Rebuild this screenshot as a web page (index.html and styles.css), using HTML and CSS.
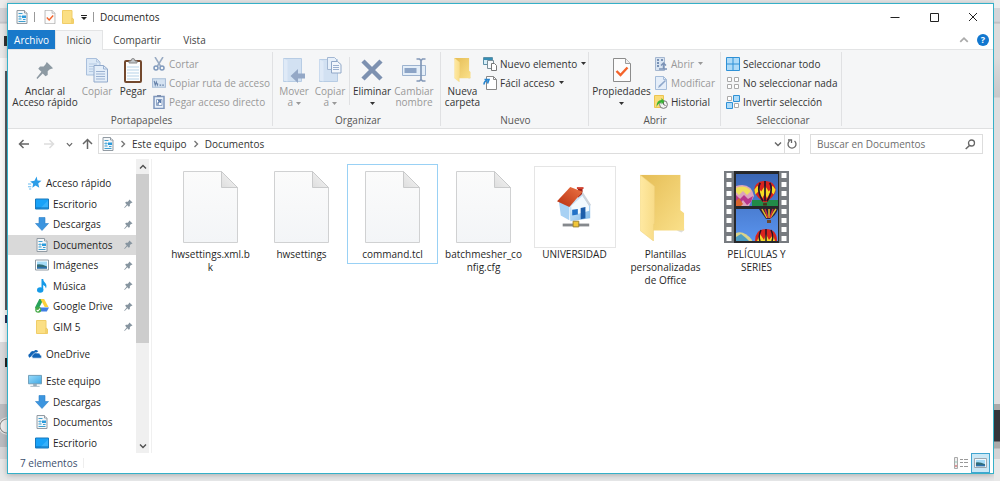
FILE: index.html
```html
<!DOCTYPE html>
<html lang="es">
<head>
<meta charset="utf-8">
<title>Documentos</title>
<link rel="stylesheet" href="styles.css">
</head>
<body>
<svg class="defs" aria-hidden="true">
  <defs>
    <linearGradient id="paper" x1="0" y1="0" x2="0" y2="1"><stop offset="0" stop-color="#fbfbfb"/><stop offset="1" stop-color="#f3f5f7"/></linearGradient>
    <linearGradient id="fold" x1="0" y1="1" x2="1" y2="0"><stop offset="0" stop-color="#dedede"/><stop offset="1" stop-color="#f7f7f7"/></linearGradient>
    <linearGradient id="gold" x1="0" y1="0" x2="1" y2="1"><stop offset="0" stop-color="#e5bd55"/><stop offset="1" stop-color="#fae08a"/></linearGradient>
    <linearGradient id="goldf" x1="0" y1="0" x2="1" y2="0"><stop offset="0" stop-color="#ffe9a2"/><stop offset="1" stop-color="#f8dc88"/></linearGradient>
    <linearGradient id="sky" x1="0" y1="0" x2="0" y2="1"><stop offset="0" stop-color="#3a66b4"/><stop offset="1" stop-color="#5a94ee"/></linearGradient>
    <linearGradient id="roof" x1="0" y1="1" x2="1" y2="0"><stop offset="0" stop-color="#b82f10"/><stop offset="1" stop-color="#ec7444"/></linearGradient>
    <linearGradient id="wall" x1="0" y1="0" x2="1" y2="1"><stop offset="0" stop-color="#e4f4ff"/><stop offset="1" stop-color="#7fb8e8"/></linearGradient>
    <linearGradient id="screen" x1="0" y1="0" x2="1" y2="1"><stop offset="0" stop-color="#9bdcfb"/><stop offset="1" stop-color="#3ea7e4"/></linearGradient>
  </defs>
  <symbol id="i-docs" viewBox="0 0 12 14"><path d="M1 .5h7.500l2.500 2.500v10.500H1z" fill="#f4f7f9" stroke="#929ba3"/><path d="M8.500 .5v2.500H11" fill="#fff" stroke="#929ba3"/><path d="M2.500 3.500h4M2.500 6.500h3M2.500 9h3M2.500 11.500h7M7 9.500h2.500" stroke="#3f9fd0"/><path d="M6 5.500h4v2.500H6z" fill="#2b9bdc"/><path d="M4 5v4" stroke="#7cc2e6"/></symbol>
  <symbol id="i-check" viewBox="0 0 18 24"><path d="M.5.500h12l5 5v18H.5z" fill="#fcfcfc" stroke="#8c8c8c"/><path d="M12.500.500v5h5" fill="#eee" stroke="#9b9b9b"/><path d="M3.500 13l4 4 7-7.500" fill="none" stroke="#f4632a" stroke-width="2.400"/></symbol>
  <symbol id="i-folder" viewBox="0 0 12 14"><path d="M.5.500h9.500v7.500l1.500 1v4.500H.5z" fill="#fbdf84" stroke="#f0cd68"/><path d="M10 8v5" stroke="#e9c357"/></symbol>
  <symbol id="i-caret" viewBox="0 0 5 3"><path d="M0 0h5L2.500 3z" fill="currentColor"/></symbol>
  <symbol id="i-pin" viewBox="0 0 20 20"><path d="M12 1l7 7-4 1.500-2 2v4l-2.500 1.500-3-3-6 6-1-1L6 12 2.500 8.500 4.500 6h4l2-2z" fill="currentColor"/></symbol>
  <symbol id="i-copy" viewBox="0 0 22 25"><path d="M.5.500h10l3.500 3.500v13H.5z" fill="#dce9f7" stroke="#a9bfdc"/><path d="M10.500.500V4H14M3 6h8M3 8.500h5M3 11h4M3 13.500h4" fill="none" stroke="#b4c9e2"/><path d="M8 7.500h9.500L21.500 11v13H8z" fill="#e4eef9" stroke="#91a9cb"/><path d="M17.500 7.500V11h4M10 13.500h9M10 16h9M10 18.500h9M10 21h9" fill="none" stroke="#9bb2d2"/></symbol>
  <symbol id="i-paste" viewBox="0 0 18 25"><rect x="1" y="3" width="16" height="21" rx="1" fill="#fdfefe" stroke="#73492e" stroke-width="2"/><path d="M5 5V3h2q0-2.500 2-2.500T11 3h2v2z" fill="#c3c7ca" stroke="#888"/><path d="M3 9h12M3 12h12M3 15h12M3 18h12M3 21h12" stroke="#b7d3e8"/></symbol>
  <symbol id="i-cut" viewBox="0 0 12 14"><path d="M2 0l5.500 9M10 0L4.500 9" stroke="#99abc3" stroke-width="1.500"/><circle cx="3" cy="11" r="2" fill="none" stroke="#7f99bd" stroke-width="1.500"/><circle cx="9" cy="11" r="2" fill="none" stroke="#7f99bd" stroke-width="1.500"/></symbol>
  <symbol id="i-path" viewBox="0 0 13 9"><path d="M.5.500h12v8H.5z" fill="#d5e3f2" stroke="#a9bed8"/><path d="M2 2.500l1 4 1-3 1 3 .5-1.500M7 6.500h1.500M9.500 6.500h1.500" fill="none" stroke="#6681a8"/></symbol>
  <symbol id="i-pshort" viewBox="0 0 12 14"><path d="M1 1.500h10v12H1z" fill="#e9f1fa" stroke="#7f97bd" stroke-width="1.500"/><path d="M4 1h4" stroke="#7d8fae" stroke-width="2"/><path d="M3.500 4.500h5.500v6H3.500z" fill="#fff" stroke="#90a6c7"/><path d="M5 10V8l2-2M5 5.500h2.500V8" fill="none" stroke="#5e7dab" stroke-width="1.300"/></symbol>
  <symbol id="i-move" viewBox="0 0 24 26"><path d="M1.500 1.500h18v23h-18z" fill="#d2e1f2" stroke="#b7cce4"/><path d="M1.500 1.500l4 2v21l-4-1z" fill="#dfeaf7"/><path d="M23 16.500h-7V12l-7.500 7 7.500 7v-4.500h7z" fill="#94a8c6"/></symbol>
  <symbol id="i-copyto" viewBox="0 0 24 26"><path d="M1.500 2.500h18v22h-18z" fill="#d2e1f2" stroke="#b7cce4"/><path d="M1.500 2.500l4 2v20l-4-1z" fill="#dfeaf7"/><path d="M9.500.500h7l2 2v10h-9z" fill="#e7f0fa" stroke="#a3b7d2"/><path d="M13.500 4.500h6l3.500 3V16h-9.500z" fill="#f3f7fc" stroke="#91a8c8"/><path d="M15 8.500h6M15 10.500h6M15 12.500h6" stroke="#9cb1cf"/></symbol>
  <symbol id="i-x" viewBox="0 0 22 22"><path d="M2 2l18 18M20 2L2 20" stroke="#7d91b0" stroke-width="4.500"/></symbol>
  <symbol id="i-rename" viewBox="0 0 24 24"><path d="M.5 7.500h23v10H.5z" fill="#e4eef8" stroke="#9db3cf"/><path d="M2.500 10h12v5h-12z" fill="#8ca4c6"/><path d="M14.500 1h3l1.500 1.500L20.500 1h3M19 2.500v19M14.500 23h3l1.500-1.500 1.500 1.500h3" fill="none" stroke="#8298b8" stroke-width="1.700"/></symbol>
  <symbol id="i-bigfolder" viewBox="0 0 46 69"><path d="M38 58l12-3-7 5z" fill="#ddd"/><path d="M0 0h42v37l4 3v18H12z" fill="url(#gold)"/><path d="M0 0l15 12v38l-1 2v17L0 58z" fill="url(#goldf)" stroke="#f0d27c" stroke-width=".6"/></symbol>
  <symbol id="i-newitem" viewBox="0 0 14 14"><path d="M.5.500h9v7h-9z" fill="#d6eef8" stroke="#5d91a8"/><path d="M1 1h8v2H1z" fill="#368eb5"/><path d="M4.500 3.500h6v8h-6z" fill="#f6f9fb" stroke="#7b8e98"/><path d="M8.500 6.500h3l2 2v5h-5z" fill="#fff" stroke="#777"/></symbol>
  <symbol id="i-easy" viewBox="0 0 14 14"><path d="M3.500.500h7l3 3v10h-10z" fill="#fff" stroke="#888"/><path d="M10.500.500v3h3" fill="none" stroke="#888"/><path d="M1 8.500q0-3.500 3.500-4M1.500 3.500H6L4.500 7.500" fill="none" stroke="#2584cf" stroke-width="1.600"/></symbol>
  <symbol id="i-open" viewBox="0 0 12 14"><path d="M.5.500h9v13h-9z" fill="#d8e4f2" stroke="#a5b7d0"/><path d="M2 3h2M2 6h2M2 9h2M6 3h2" stroke="#7891b5" stroke-width="2"/><path d="M8.500 12V6M6 8.500L8.500 6 11 8.500M4 12h8" fill="none" stroke="#7c93b6" stroke-width="1.500"/></symbol>
  <symbol id="i-edit" viewBox="0 0 12 14"><path d="M.5.500h8l3 3v10H.5z" fill="#e5eef9" stroke="#a5bcd9"/><path d="M11 5l-6 6-2 1 1-2.500L10 4z" fill="#8fa8cb"/><path d="M8.500.500v3h3" fill="none" stroke="#a5bcd9"/></symbol>
  <symbol id="i-history" viewBox="0 0 14 14"><path d="M.5.500h9v12h-9z" fill="#fbdc78" stroke="#ecc450"/><circle cx="9.500" cy="9.500" r="3.900" fill="#f3f3f3" stroke="#777"/><path d="M9.500 7v2.500l2 1" fill="none" stroke="#666"/><path d="M2.500 12q0-7 5-7V3l3 3.500-3 3V7.500Q4.500 7.500 2.500 12z" fill="#38b234"/></symbol>
  <symbol id="i-all" viewBox="0 0 14 14"><path d="M.5.500h13v13H.5zM7 .5v13M.5 7h13" fill="#aedbf8" stroke="#2e91d6"/></symbol>
  <symbol id="i-none" viewBox="0 0 14 14"><path d="M1.500 1.500h4v4h-4zM8.500 1.500h4v4h-4zM1.500 8.500h4v4h-4zM8.500 8.500h4v4h-4z" fill="#fff" stroke="#aaa"/></symbol>
  <symbol id="i-inv" viewBox="0 0 14 14"><path d="M1.500 1.500h4v4h-4zM8.500 8.500h4v4h-4z" fill="#fff" stroke="#aaa"/><path d="M7.500.500h6v6h-6zM.5 7.500h6v6h-6z" fill="#aedbf8" stroke="#2e91d6"/></symbol>
  <symbol id="i-chev" viewBox="0 0 8 8"><path d="M1 2.500l3 3 3-3" fill="none" stroke="currentColor" stroke-width="1.400"/></symbol>
  <symbol id="i-star" viewBox="0 0 13 12"><path d="M8 0l.8 3.700 3.700.3-3 2.400 1 4-3.500-2-3 2 .8-3.600L2 4.500l4-.7z" fill="#2c9de8"/><path d="M0 7h3M0 9.500h3M1 11.500h2" stroke="#68bbf0"/></symbol>
  <symbol id="i-desk" viewBox="0 0 14 11"><path d="M.5.500h13v10H.5z" fill="#18a2f8" stroke="#1878bc"/><path d="M5 10L13 2v8z" fill="#36b1fb"/><path d="M1 9.500h12" stroke="#0c6eb6"/></symbol>
  <symbol id="i-down" viewBox="0 0 14 14"><path d="M4 .5h6v6h3.500L7 13.500.5 6.500H4z" fill="#3c95df" stroke="#2c7fc8" stroke-width=".6"/></symbol>
  <symbol id="i-img" viewBox="0 0 14 11"><path d="M.5.500h13v10H.5z" fill="#fff" stroke="#919ba4"/><path d="M2 2h10v7H2z" fill="#a5dcf8"/><path d="M2 5q4-1 10 2v2H2z" fill="#326d78"/><path d="M2 7.500h10V9H2z" fill="#2a6fae"/></symbol>
  <symbol id="i-music" viewBox="0 0 10 14"><ellipse cx="3.200" cy="11" rx="3.200" ry="2.700" fill="#159ae8"/><path d="M4.500 0h1.700q0 2.500 2 4T9 9.500Q8.500 6.500 6.200 6v5H4.500z" fill="#159ae8"/></symbol>
  <symbol id="i-drive" viewBox="0 0 13 13"><path d="M4 0h4L4 8l-2 3.500L0 8z" fill="#28a25b"/><path d="M5 0h3.500l4 7.500H9z" fill="#fbd13e"/><path d="M4.500 8H13l-2 3.500H2.500z" fill="#3f7fe5"/><circle cx="3" cy="10" r="2.800" fill="#46a947"/><path d="M1.500 10l1.200 1.200L4.700 9" fill="none" stroke="#fff"/></symbol>
  <symbol id="i-cloud" viewBox="0 0 15 10"><path d="M1.500 9Q-1 6 2 4.500 3 1 6.500 2 8-.5 11 2" fill="#1265b7"/><path d="M5 9.500Q2.500 7 5.500 5.500 7 2.500 10 4q3-.8 3.200 2 2.500 1 1 3.500z" fill="#1265b7" stroke="#fff" stroke-width=".7"/></symbol>
  <symbol id="i-pc" viewBox="0 0 15 13"><path d="M.5.500h14v9H.5z" fill="url(#screen)" stroke="#6c9ab5"/><path d="M6 10h3v1.500H6zM2.500 12.200h10" fill="#9cb1bf" stroke="#8ba2b2" stroke-width=".8"/></symbol>
  <symbol id="i-file" viewBox="0 0 55 72"><path d="M.5.500h38l16 16v55H.5z" fill="url(#paper)" stroke="#d0d1d2"/><path d="M38.500.500v16h16z" fill="url(#fold)" stroke="#c9cacb"/></symbol>
  <symbol id="i-house" viewBox="0 0 38 42"><path d="M22 1h5v12h-5z" fill="#a22015"/><path d="M21 0h7v2h-7z" fill="#cf4130"/><path d="M2 15l11 5v15L4 30z" fill="#a7d1f4"/><path d="M13 19L27 7l8 11v15l-21 3z" fill="url(#wall)"/><path d="M15 20L27 9l7 11v5l-18 5z" fill="#f3faff"/><path d="M0 15L14 0l13 5-14 16z" fill="url(#roof)"/><path d="M27 5l9 14-2 1-8-12z" fill="#cdd4dc"/><path d="M16 24l6-1v6l-6 1z" fill="#2372c8"/><path d="M25 22l5-1v12l-5 1z" fill="#1c5daa"/><path d="M6 40h28" stroke="#85898d" stroke-width="3"/><path d="M17 36h6v6h-6z" fill="#f1c638" stroke="#9a8130"/></symbol>
  <symbol id="i-balloon" viewBox="0 0 22 26"><path d="M11 0C4 0 0 4 0 9.500S7 19 9 22h4c2-3 9-7 9-12.500S18 0 11 0z" fill="#d9231e"/><path d="M0 9l3-4 4 6 4-6 4 6 4-6 3 4-2 5-3-3-4 7-2-5-3 5-4-7-3 3z" fill="#f7dc24"/><path d="M6 2Q2 10 9 21M16 2q4 8-3 19M11 0v21" fill="none" stroke="#25162a" stroke-width="1.800"/><path d="M9 23h4v2.500H9z" fill="#50301b"/></symbol>
  <symbol id="i-film" viewBox="0 0 65 72"><path d="M0 0h65v72H0z" fill="#777b80"/><path d="M10 0h45v72H10z" fill="#27282b"/><path d="M12 3h42v32H12zM12 38h42v32H12z" fill="url(#sky)"/><path d="M28 29h26v6H28z" fill="#218b48"/><path d="M12 15q15-4 18 10l-5 10H12z" fill="#dba4bd"/><path d="M12 17q9-4 15 3l-4 4-4-4-4 4-3-3z" fill="#efe05a"/><path d="M12 24l4 4 4-4 4 4 5-3-2 6-4 3-4-5-4 5-3-3z" fill="#b7378d"/><path d="M12 30l3-3 4 6-2 2h-5z" fill="#d9652d"/><use href="#i-balloon" x="30" y="10" width="22" height="25"/><path d="M35 38h19q-2 6-8 10h-4z" fill="#282341"/><path d="M38 38l5 9M45 38v9M52 38l-6 9" stroke="#e4bd26" stroke-width="1.500"/><path d="M41 38l3 9M49 38l-3 9" stroke="#d22e35" stroke-width="1.500"/><path d="M43 49h4v3h-4z" fill="#6b462c"/><path d="M12 62q8-3 16 7v1H12z" fill="#d9d38b"/><path d="M12 66l5-3 5 4 3 3H12z" fill="#4f9dc1"/><path d="M31 70q0-12 11-12t11 12z" fill="#d9231e"/><path d="M33 70l3-7 4 6 2-6 3 6 4-5 2 6z" fill="#f5dc2a"/><path d="M37 59q-3 6-1 11M47 59q3 6 1 11M42 58v12" fill="none" stroke="#25162a" stroke-width="1.500"/><path d="M5 2v70M60 2v70" stroke="#fff" stroke-width="5" stroke-dasharray="5 4"/></symbol>
</svg>

<div class="desk">
  <div class="behind behind-left"></div>
  <div class="window">
    <header class="titlebar">
      <svg class="s12x14"><use href="#i-docs"/></svg>
      <span class="rule"></span>
      <button class="plain" aria-label="Propiedades"><svg class="s12x14"><use href="#i-check"/></svg></button>
      <button class="plain" aria-label="Nueva carpeta"><svg class="s12x14"><use href="#i-folder"/></svg></button>
      <button class="plain quick" aria-label="Personalizar"><svg width="6" height="7" viewBox="0 0 6 7"><path d="M0 1.500h6" stroke="#222"/><path d="M0 3h6L3 6z" fill="#222"/></svg></button>
      <span class="rule"></span>
      <h1>Documentos</h1>
      <div class="controls">
        <button class="plain" aria-label="Minimizar"><svg width="10" height="10"><path d="M.5 5.500h9" stroke="#222"/></svg></button>
        <button class="plain" aria-label="Maximizar"><svg width="10" height="10"><path d="M1.500 1.500h8v8h-8z" fill="none" stroke="#222"/></svg></button>
        <button class="plain" aria-label="Cerrar"><svg width="10" height="10"><path d="M1 1l8 8M9 1L1 9" stroke="#222"/></svg></button>
      </div>
    </header>

    <nav class="tabs">
      <button class="tab file-tab">Archivo</button>
      <button class="tab active">Inicio</button>
      <button class="tab wide">Compartir</button>
      <button class="tab">Vista</button>
      <div class="help">
        <button class="plain faint flip" aria-label="Minimizar la cinta"><svg class="s10"><use href="#i-chev"/></svg></button>
        <button class="help-btn" aria-label="Ayuda">?</button>
      </div>
    </nav>

    <section class="ribbon">
      <div class="group g-clip">
        <div class="tools">
          <button class="big"><span class="pic pin-pic"><svg width="18" height="18"><use href="#i-pin"/></svg></span>Anclar al<br>Acceso rápido</button>
          <button class="big off"><span class="pic"><svg width="22" height="25"><use href="#i-copy"/></svg></span>Copiar</button>
          <button class="big"><span class="pic"><svg width="18" height="25"><use href="#i-paste"/></svg></span>Pegar</button>
          <div class="stack">
            <button class="small off"><svg class="s14"><use href="#i-cut"/></svg>Cortar</button>
            <button class="small off"><svg class="s14"><use href="#i-path"/></svg>Copiar ruta de acceso</button>
            <button class="small off"><svg class="s14"><use href="#i-pshort"/></svg>Pegar acceso directo</button>
          </div>
        </div>
        <h2>Portapapeles</h2>
      </div>
      <div class="group g-org">
        <div class="tools">
          <button class="big off"><span class="pic"><svg width="24" height="26"><use href="#i-move"/></svg></span>Mover<br>a <svg class="caret"><use href="#i-caret"/></svg></button>
          <button class="big off"><span class="pic"><svg width="24" height="26"><use href="#i-copyto"/></svg></span>Copiar<br>a <svg class="caret"><use href="#i-caret"/></svg></button>
          <span class="divider"></span>
          <button class="big"><span class="pic"><svg width="22" height="22"><use href="#i-x"/></svg></span>Eliminar<br><svg class="caret"><use href="#i-caret"/></svg></button>
          <button class="big off"><span class="pic"><svg width="24" height="24"><use href="#i-rename"/></svg></span>Cambiar<br>nombre</button>
        </div>
        <h2>Organizar</h2>
      </div>
      <div class="group g-new">
        <div class="tools">
          <button class="big"><span class="pic"><svg width="17" height="24"><use href="#i-bigfolder"/></svg></span>Nueva<br>carpeta</button>
          <div class="stack">
            <button class="small"><svg class="s14"><use href="#i-newitem"/></svg>Nuevo elemento <svg class="caret"><use href="#i-caret"/></svg></button>
            <button class="small"><svg class="s14"><use href="#i-easy"/></svg>Fácil acceso <svg class="caret"><use href="#i-caret"/></svg></button>
          </div>
        </div>
        <h2>Nuevo</h2>
      </div>
      <div class="group g-open">
        <div class="tools">
          <button class="big"><span class="pic"><svg width="18" height="24"><use href="#i-check"/></svg></span>Propiedades<br><svg class="caret"><use href="#i-caret"/></svg></button>
          <div class="stack">
            <button class="small off"><svg class="s14"><use href="#i-open"/></svg>Abrir <svg class="caret"><use href="#i-caret"/></svg></button>
            <button class="small off"><svg class="s14"><use href="#i-edit"/></svg>Modificar</button>
            <button class="small"><svg class="s14"><use href="#i-history"/></svg>Historial</button>
          </div>
        </div>
        <h2>Abrir</h2>
      </div>
      <div class="group g-sel">
        <div class="tools">
          <div class="stack">
            <button class="small"><svg class="s14"><use href="#i-all"/></svg>Seleccionar todo</button>
            <button class="small"><svg class="s14"><use href="#i-none"/></svg>No seleccionar nada</button>
            <button class="small"><svg class="s14"><use href="#i-inv"/></svg>Invertir selección</button>
          </div>
        </div>
        <h2>Seleccionar</h2>
      </div>
    </section>

    <div class="nav">
      <div class="arrows">
        <button class="plain" aria-label="Atrás"><svg width="12" height="10"><path d="M11 5H1.500M5.500 1l-4 4 4 4" fill="none" stroke="#666" stroke-width="1.500"/></svg></button>
        <button class="plain" aria-label="Adelante"><svg width="12" height="10"><path d="M1 5h9.500M6.500 1l4 4-4 4" fill="none" stroke="#ddd" stroke-width="1.500"/></svg></button>
        <button class="plain" aria-label="Recientes"><svg width="7" height="7"><use href="#i-chev"/></svg></button>
        <button class="plain" aria-label="Subir"><svg width="11" height="12"><path d="M5.500 11V1.500M1 6l4.500-4.500L10 6" fill="none" stroke="#666" stroke-width="1.500"/></svg></button>
      </div>
      <div class="address">
        <svg class="s12x14"><use href="#i-docs"/></svg>
        <svg class="s8 side"><use href="#i-chev"/></svg>
        <a href="#">Este equipo</a>
        <svg class="s8 side"><use href="#i-chev"/></svg>
        <a href="#">Documentos</a>
        <button class="plain drop" aria-label="Historial de direcciones"><svg class="s8"><use href="#i-chev"/></svg></button>
        <button class="plain refresh" aria-label="Actualizar"><svg width="10" height="10" viewBox="0 0 10 10"><path d="M2.500 2A4 4 0 1 0 7.500 2M1 1h3.500v3" fill="none" stroke="#666" stroke-width="1.300"/></svg></button>
      </div>
      <label class="search">
        <input type="text" placeholder="Buscar en Documentos" aria-label="Buscar en Documentos">
        <svg width="11" height="11" viewBox="0 0 11 11"><circle cx="6.500" cy="4" r="3" fill="none" stroke="#666" stroke-width="1.300"/><path d="M4.500 6.500L.7 10" stroke="#666" stroke-width="1.500"/></svg>
      </label>
    </div>

    <main class="body">
      <aside class="tree">
        <ul>
          <li class="root"><svg class="s14"><use href="#i-star"/></svg><a href="#">Acceso rápido</a></li>
          <li><svg class="s14"><use href="#i-desk"/></svg><a href="#">Escritorio</a><svg class="pin"><use href="#i-pin"/></svg></li>
          <li><svg class="s14"><use href="#i-down"/></svg><a href="#">Descargas</a><svg class="pin"><use href="#i-pin"/></svg></li>
          <li class="current"><svg class="s14"><use href="#i-docs"/></svg><a href="#">Documentos</a><svg class="pin"><use href="#i-pin"/></svg></li>
          <li><svg class="s14"><use href="#i-img"/></svg><a href="#">Imágenes</a><svg class="pin"><use href="#i-pin"/></svg></li>
          <li><svg class="s14"><use href="#i-music"/></svg><a href="#">Música</a><svg class="pin"><use href="#i-pin"/></svg></li>
          <li><svg class="s14"><use href="#i-drive"/></svg><a href="#">Google Drive</a><svg class="pin"><use href="#i-pin"/></svg></li>
          <li><svg class="s14"><use href="#i-folder"/></svg><a href="#">GIM 5</a><svg class="pin"><use href="#i-pin"/></svg></li>
        </ul>
        <ul>
          <li class="root"><svg class="s14"><use href="#i-cloud"/></svg><a href="#">OneDrive</a></li>
        </ul>
        <ul>
          <li class="root"><svg class="s14"><use href="#i-pc"/></svg><a href="#">Este equipo</a></li>
          <li><svg class="s14"><use href="#i-down"/></svg><a href="#">Descargas</a></li>
          <li><svg class="s14"><use href="#i-docs"/></svg><a href="#">Documentos</a></li>
          <li><svg class="s14"><use href="#i-desk"/></svg><a href="#">Escritorio</a></li>
        </ul>
      </aside>
      <div class="scroll">
        <button class="plain flip" aria-label="Subir lista"><svg class="s8"><use href="#i-chev"/></svg></button>
        <div class="track"><div class="thumb"></div></div>
        <button class="plain" aria-label="Bajar lista"><svg class="s8"><use href="#i-chev"/></svg></button>
      </div>
      <section class="files">
        <figure><svg width="55" height="72"><use href="#i-file"/></svg><figcaption>hwsettings.xml.b<br>k</figcaption></figure>
        <figure><svg width="55" height="72"><use href="#i-file"/></svg><figcaption>hwsettings</figcaption></figure>
        <figure class="focused"><svg width="55" height="72"><use href="#i-file"/></svg><figcaption>command.tcl</figcaption></figure>
        <figure><svg width="55" height="72"><use href="#i-file"/></svg><figcaption>batchmesher_co<br>nfig.cfg</figcaption></figure>
        <figure class="framed"><div class="frame"><svg width="36" height="42"><use href="#i-house"/></svg></div><figcaption>UNIVERSIDAD</figcaption></figure>
        <figure><svg width="52" height="72" viewBox="1 -4 52 75"><use href="#i-bigfolder" width="46" height="69"/></svg><figcaption>Plantillas<br>personalizadas<br>de Office</figcaption></figure>
        <figure><svg width="65" height="72"><use href="#i-film"/></svg><figcaption>PELÍCULAS Y<br>SERIES</figcaption></figure>
      </section>
    </main>

    <footer class="status">
      <span class="count">7 elementos</span>
      <span class="rule"></span>
      <div class="views">
        <button class="plain" aria-label="Detalles"><svg width="14" height="12"><path d="M.5.500h3v11h-3z" fill="#eee" stroke="#aaa"/><path d="M1.500 5h1" stroke="#3a8"/><path d="M1.500 9h1" stroke="#c44" stroke-width="2"/><path d="M6 2.500h3M10 2.500h4M6 5.500h3M10 5.500h4M6 9.500h3M10 9.500h4" stroke="#999"/></svg></button>
        <button class="plain chosen" aria-label="Iconos grandes"><svg width="13" height="10"><use href="#i-img"/></svg></button>
      </div>
    </footer>
  </div>
  <div class="behind behind-right"></div>
</div>
</body>
</html>
```
FILE: styles.css
```css
* { box-sizing: border-box; }
body { margin: 0; background: #e6e7e8; font: 10px/12px "Open Sans", "Noto Sans", sans-serif; color: #1f1f1f; }
button, input { font: inherit; color: inherit; border: 0; padding: 0; margin: 0; background: none; }
a { color: inherit; text-decoration: none; }
h1, h2, ul, figure { margin: 0; padding: 0; font: inherit; list-style: none; }
svg { display: block; flex: none; overflow: visible; }
.defs { position: absolute; width: 0; height: 0; }

.desk { display: flex; min-height: 100vh; }
.behind { flex: none; }
.behind-left {
  width: 7px;
  background:
    linear-gradient(#333, #333) 4px 36px / 3px 10px no-repeat,
    linear-gradient(#555b62, #555b62) 5px 71px / 2px 239px no-repeat,
    linear-gradient(#2b3158, #2b3158) 5px 315px / 2px 8px no-repeat,
    linear-gradient(#222, #222) 5px 358px / 2px 9px no-repeat,
    radial-gradient(circle at 7px 426px, #eee 6px, #888 7px, #eee 8px, transparent 9px),
    linear-gradient(#ececec 8px, #d4d5d9 8px 21px, #c0c1c5 23px, #e8e8e8 24px 58px, #f7f7f7 58px 342px, #dadadc 342px 404px, #bbbcc0 404px 447px, #d6d7d9 447px 459px, #e8e8e8 459px);
}
.behind-right {
  width: 6px;
  background: linear-gradient(#ececec 8px, #d4d5d9 8px 21px, #b9babd 23px, #dcdcdc 24px 58px, #d4d4d5 71px, #c8c8ca 97px, #dededf 98px 404px, #aaa 404px 410px, #33343b 410px 441px, #aaa 442px 448px, #d3d3d5 449px 459px, #e8e8e8 459px);
}

.window { flex: 1; min-width: 0; margin: 3px 0 7px; display: flex; flex-direction: column; background: #fff; border: 1px solid #35b0c8; box-shadow: 0 1px 6px #0004; }
.plain { display: flex; align-items: center; justify-content: center; }
.rule { width: 1px; height: 10px; background: #999; }
.s12x14 { width: 12px; height: 14px; }
.s14 { width: 14px; height: 14px; }
.s10 { width: 10px; height: 10px; }
.s8 { width: 8px; height: 8px; }
.flip svg { transform: rotate(180deg); }
.side { transform: rotate(-90deg); }
.faint { color: #aaa; }
.caret { display: inline-block; width: 5px; height: 3px; vertical-align: middle; }

.titlebar { display: flex; align-items: center; height: 26px; padding-left: 8px; gap: 6px; }
.titlebar .rule + .plain { margin-left: 3px; }
.titlebar .quick { margin-left: 1px; }
.controls { display: flex; align-self: stretch; margin-left: auto; padding-right: 1px; }
.controls button { width: 39px; }

.tabs { display: flex; height: 20px; border-bottom: 1px solid #e3e4e5; color: #444; }
.tab { width: 47px; text-align: center; }
.tab.wide { width: 68px; }
.tab.file-tab { background: #1979ca; color: #fff; }
.tab.active { border: 1px solid #e3e4e5; border-bottom: 0; background: #f5f6f7; margin-bottom: -1px; width: 48px; padding-bottom: 1px; }
.help { display: flex; align-items: center; gap: 8px; margin-left: auto; padding-right: 4px; }
.help-btn { width: 12px; height: 12px; border-radius: 50%; background: #1177cf; color: #fff; font-size: 9px; line-height: 12px; font-weight: 700; }

.ribbon { display: flex; height: 79px; padding: 2px 0; background: #f5f6f7; border-bottom: 1px solid #dfe0e1; }
.group { display: flex; flex-direction: column; justify-content: space-between; border-right: 1px solid #e0e1e3; color: #333; }
.group h2 { text-align: center; color: #555; line-height: 12px; }
.tools { display: flex; align-items: flex-start; height: 60px; }
.g-clip { width: 265px; padding-left: 3px; }
.g-org { width: 168px; padding-left: 3px; }
.g-new { width: 148px; padding-left: 2px; }
.g-open { width: 132px; padding-left: 1px; }
.g-sel { width: 121px; padding-left: 4px; }
.big { width: 36px; padding-top: 5px; line-height: 11px; text-align: center; white-space: nowrap; }
.big .pic { display: flex; align-items: center; justify-content: center; height: 26px; margin-bottom: 3px; }
.pin-pic { color: #8d9aa3; }
.g-clip .big { width: 36px; }
.g-clip .big:first-child { width: 68px; }
.g-org .big:nth-child(n+4) { width: 42px; }
.g-new .big { width: 39px; }
.g-open .big { width: 63px; }
.off { color: #999; }
.divider { width: 1px; height: 48px; margin: 5px 1px; background: #e0e1e3; }
.stack { padding-top: 2px; margin-left: 1px; }
.small { display: flex; align-items: center; gap: 3px; height: 19px; white-space: nowrap; }
.small .caret { margin-left: 1px; }

.nav { display: flex; height: 30px; align-items: center; padding-right: 10px; color: #444; }
.arrows { display: grid; grid-template-columns: 32px 18px 22px 14px; width: 90px; color: #666; }
.address { display: flex; align-items: center; flex: 1; height: 20px; border: 1px solid #ddd; padding-left: 3px; gap: 5px; min-width: 0; color: #333; }
.address .side { color: #777; }
.drop { margin-left: auto; color: #666; }
.refresh { width: 15px; height: 18px; border-left: 1px solid #ddd; margin-left: -3px; }
.search { display: flex; align-items: center; width: 173px; height: 20px; margin-left: 10px; border: 1px solid #ddd; padding: 0 6px; }
.search input { flex: 1; min-width: 0; outline: 0; }
.search input::placeholder { color: #6d6d6d; opacity: 1; }

.body { display: flex; flex: 1; min-height: 0; }
.tree { width: 128px; padding-top: 14px; }
.tree ul { display: grid; grid-auto-rows: 1fr; margin-bottom: 7px; }
.tree ul:first-child { height: 164px; }
.tree ul:nth-child(2) { height: 20px; }
.tree ul:last-child { height: 82px; margin: 0; }
.tree li { display: flex; align-items: center; gap: 4px; padding: 0 3px 0 27px; }
.tree .root { padding-left: 20px; }
.tree .current { background: #d9d9d9; }
.pin { width: 9px; height: 9px; margin-left: auto; color: #8795a0; }
.scroll { display: flex; flex-direction: column; width: 13px; background: #f0f0f0; color: #505050; }
.scroll button { height: 15px; }
.track { flex: 1; }
.thumb { height: 64%; background: #cdcdcd; }
.files { flex: 1; margin-left: 2px; border-left: 1px solid #f0f0f0; padding: 5px 0 0 13px; display: grid; grid-template-columns: repeat(auto-fill, 91px); align-content: start; align-items: start; }
.files figure { display: flex; flex-direction: column; align-items: center; padding: 6px 0 1px; border: 1px solid transparent; text-align: center; line-height: 13px; }
.files figcaption { margin-top: 5px; padding-bottom: 1px; white-space: nowrap; }
.files .focused { border-color: #99d1f5; }
.files .framed { padding-top: 1px; }
.frame { display: flex; align-items: center; justify-content: center; width: 82px; height: 82px; border: 1px solid #e5e5e5; }
.files .framed figcaption { margin-top: 0; }

.status { display: flex; align-items: center; height: 20px; padding-left: 12px; color: #3c4f6e; }
.status .rule { background: #eee; margin-left: 6px; }
.views { display: flex; margin-left: auto; gap: 3px; padding-right: 3px; }
.chosen { width: 19px; height: 20px; background: #cbe8f6; border: 1px solid #40a5d0; }
```
